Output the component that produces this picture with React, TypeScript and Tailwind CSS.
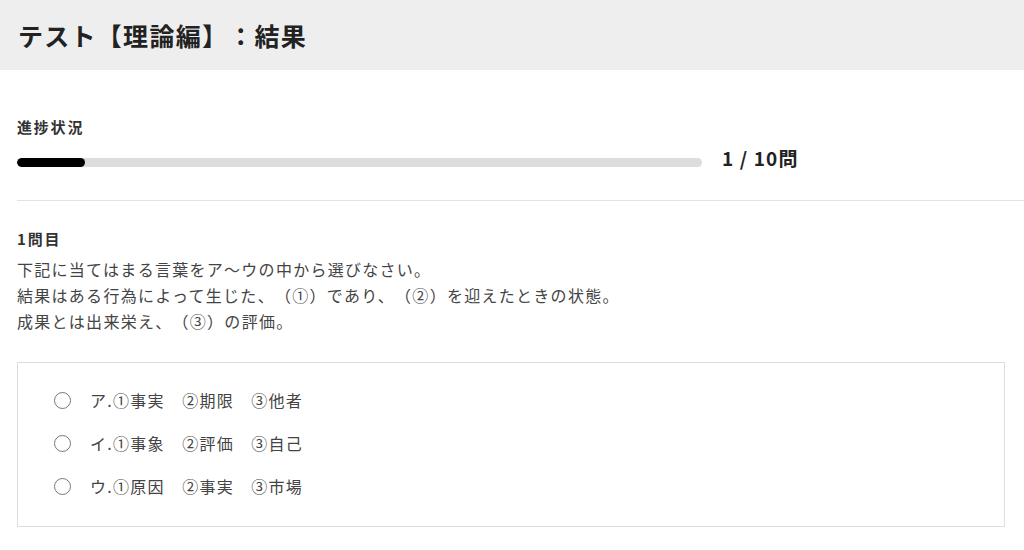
const options = [
  'ア.①事実　②期限　③他者',
  'イ.①事象　②評価　③自己',
  'ウ.①原因　②事実　③市場',
];

const App = () => {
  return (
    <div
      className="min-h-screen bg-white tracking-[0.08em] [text-spacing-trim:space-all]"
      style={{ fontFamily: '"Noto Sans CJK JP", "Noto Sans", sans-serif' }}
    >
      {/* Header */}
      <header className="h-[70px] bg-[#eeeeee] flex items-center pl-[18px]">
        <h1 className="text-[25px] font-bold text-[#222] leading-none">テスト【理論編】：結果</h1>
      </header>

      <main className="pl-[17px]">
        {/* Progress */}
        <div className="pt-[46px] pr-[19px]">
          <p className="text-[15px] font-bold text-[#333] leading-[22px] tracking-[0.12em]">進捗状況</p>
          <div className="flex items-center h-[19px] mt-[15px]">
            <div className="w-[685px] h-[9px] rounded-full bg-[#dddddd] overflow-hidden">
              <div className="w-[68px] h-full rounded-full bg-black"></div>
            </div>
            <span className="relative -top-[5px] ml-[20px] text-[19px] font-bold text-[#222] leading-none tracking-[0.06em]">1 / 10問</span>
          </div>
        </div>

        <div className="h-px bg-[#e3e3e3] mt-[28px]"></div>

        {/* Question */}
        <div className="pr-[19px] pt-[27px]">
          <p className="text-[15px] font-bold text-[#333] leading-[22px] tracking-[0.12em]">1問目</p>
          <div className="mt-[6px] text-[16px] text-[#444] leading-[26px]">
            <p>下記に当てはまる言葉をア～ウの中から選びなさい。</p>
            <p>結果はある行為によって生じた、（①）であり、（②）を迎えたときの状態。</p>
            <p>成果とは出来栄え、（③）の評価。</p>
          </div>

          <div className="mt-[28px] border border-[#dddddd] h-[165px] pt-[26px] pl-[36px] flex flex-col gap-[21px]">
            {options.map((opt) => (
              <label key={opt} className="flex items-center h-[22px]">
                <span className="w-[17px] h-[17px] rounded-full border border-[#777] bg-white"></span>
                <span className="ml-[19px] text-[16px] text-[#444] leading-[22px]">{opt}</span>
              </label>
            ))}
          </div>
        </div>
      </main>
    </div>
  );
};

export default App;
